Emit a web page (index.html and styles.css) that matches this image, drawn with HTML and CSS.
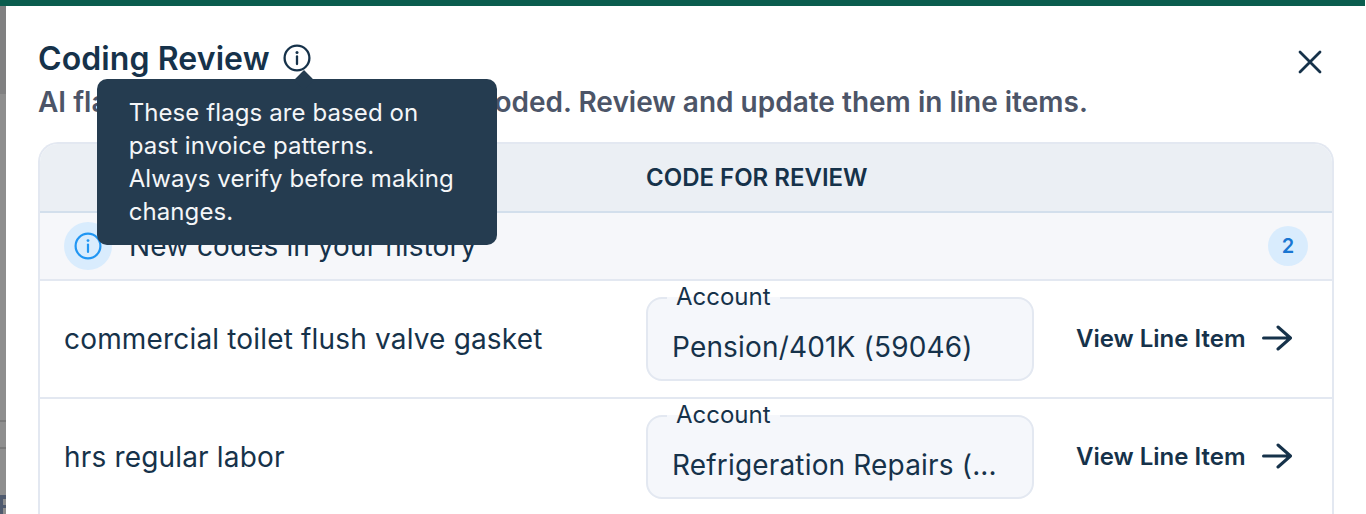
FILE: index.html
```html
<!DOCTYPE html>
<html lang="en">
<head>
<meta charset="utf-8">
<title>Coding Review</title>
<link rel="stylesheet" href="styles.css">
</head>
<body>
<div class="topbar"></div>
<div class="stage">
  <div class="backdrop"></div>
  <main class="modal">
    <header class="head">
      <div class="head-text">
        <div class="title-row">
          <h1 class="title">Coding Review</h1>
          <span class="info-wrap">
            <svg class="info-icon" viewBox="0 0 28 28" aria-hidden="true"><circle cx="14" cy="14" r="12.4" fill="none" stroke="currentColor" stroke-width="2.3"/><path d="M14 12.5v7.5" stroke="currentColor" stroke-width="2.3" stroke-linecap="round"/><circle cx="14" cy="8.6" r="1.5" fill="currentColor"/></svg>
            <span class="tooltip">These flags are based on<br>past invoice patterns.<br>Always verify before making<br>changes.</span>
          </span>
        </div>
        <p class="subtitle">AI flagged items that may be miscoded. Review and update them in line items.</p>
      </div>
      <svg class="close" viewBox="0 0 24 24" aria-hidden="true"><path d="M2 2l20 20M22 2L2 22" stroke="currentColor" stroke-width="2.8" stroke-linecap="round"/></svg>
    </header>
    <section class="table">
      <div class="thead"><span>CODE FOR REVIEW</span></div>
      <div class="group">
        <span class="group-icon"><svg viewBox="0 0 28 28" aria-hidden="true"><circle cx="14" cy="14" r="12.4" fill="none" stroke="currentColor" stroke-width="2.2"/><path d="M14 12.5v7.5" stroke="currentColor" stroke-width="2.2" stroke-linecap="round"/><circle cx="14" cy="8.6" r="1.4" fill="currentColor"/></svg></span>
        <span class="group-label">New codes in your history</span>
        <span class="badge">2</span>
      </div>
      <div class="row">
        <span class="desc">commercial toilet flush valve gasket</span>
        <div class="field"><span class="field-label">Account</span><span class="field-value">Pension/401K (59046)</span></div>
        <a class="link">View Line Item<svg viewBox="0 0 30 26" aria-hidden="true"><path d="M1.5 13h26.5M16 2l12.5 11L16 24" fill="none" stroke="currentColor" stroke-width="3" stroke-linecap="round" stroke-linejoin="round"/></svg></a>
      </div>
      <div class="row">
        <span class="desc">hrs regular labor</span>
        <div class="field"><span class="field-label">Account</span><span class="field-value">Refrigeration Repairs (...</span></div>
        <a class="link">View Line Item<svg viewBox="0 0 30 26" aria-hidden="true"><path d="M1.5 13h26.5M16 2l12.5 11L16 24" fill="none" stroke="currentColor" stroke-width="3" stroke-linecap="round" stroke-linejoin="round"/></svg></a>
      </div>
    </section>
  </main>
</div>
</body>
</html>
```
FILE: styles.css
```css
* { box-sizing: border-box; }
html, body { margin: 0; height: 514px; overflow: hidden; }
body { font-family: Inter, "Liberation Sans", sans-serif; color: #16324a; background: #fff; display: flex; flex-direction: column; }
.topbar { height: 6px; flex: none; background: #0b5d4e; margin-right: 1px; }
.stage { flex: 1; display: flex; min-height: 0; }
.backdrop { width: 6px; flex: none; background:
  linear-gradient(#4f5a6e 0 0) 0 489px / 6px 4px no-repeat,
  linear-gradient(#4f5a6e 0 0) 0 489px / 3px 19px no-repeat,
  linear-gradient(#4f5a6e 0 0) 0 499px / 6px 3px no-repeat,
  linear-gradient(#7a7a7a 0 0) 0 414px / 6px 2px no-repeat,
  linear-gradient(#7a7a7a 0 0) 0 441px / 6px 2px no-repeat,
  linear-gradient(#808081 0 0) 0 0 / 6px 88px no-repeat,
  #8e8e8e; }
.modal { flex: 1; min-width: 0; padding: 30px 32px 0 32px; }
.head { display: flex; justify-content: space-between; align-items: flex-start; }
.title-row { display: flex; align-items: center; gap: 13px; height: 44px; }
.title { margin: 0; padding-top: 1px; font-size: 32px; font-weight: 600; letter-spacing: .1px; line-height: 44px; color: #16324a; }
.info-wrap { position: relative; display: flex; color: #16324a; }
.info-icon { width: 28px; height: 28px; display: block; }
.tooltip { position: absolute; left: -186px; top: 35px; width: 400px; height: 166px; padding: 17px 32px; background: #253c50; color: #f4f6f8; border-radius: 10px; font-size: 24px; letter-spacing: .1px; line-height: 33px; z-index: 2; white-space: nowrap; }
.tooltip::before { content: ""; position: absolute; left: 200px; top: -6px; width: 14px; height: 14px; background: #253c50; transform: rotate(45deg); }
.subtitle { margin: 0; font-size: 28px; font-weight: 600; line-height: 44px; color: #4c5568; white-space: nowrap; }
.close { width: 24px; height: 24px; margin: 14px 12px 0 0; color: #16324a; flex: none; }
.table { margin-top: 18px; border: 2px solid #e3e8f1; border-bottom: 0; border-radius: 20px 20px 0 0; overflow: hidden; }
.thead { height: 69px; background: #ebeff4; border-bottom: 2px solid #d3dfec; padding-left: 606px; display: flex; align-items: center; font-size: 24px; font-weight: 600; color: #16324a; }
.group { height: 68px; background: #f6f7fa; border-bottom: 2px solid #e3e8f1; padding: 0 24px; display: flex; align-items: center; gap: 17px; }
.group-icon { width: 48px; height: 48px; border-radius: 50%; background: #d9ecfd; color: #2196f3; display: flex; align-items: center; justify-content: center; }
.group-icon svg { width: 28px; height: 28px; }
.group-label { flex: 1; font-size: 28px; letter-spacing: .08px; }
.badge { width: 40px; height: 40px; border-radius: 50%; background: #d9ecfd; color: #1976d2; font-size: 20px; font-weight: 600; display: flex; align-items: center; justify-content: center; }
.row { height: 118px; border-bottom: 2px solid #e3e8f1; padding: 0 24px; display: grid; grid-template-columns: 582px 388px 1fr; align-items: center; }
.desc { font-size: 28px; letter-spacing: .17px; }
.field { position: relative; height: 84px; background: #f5f7fb; border: 2px solid #e3e8f1; border-radius: 16px; padding: 0 24px; display: flex; align-items: center; }
.field-label { position: absolute; left: 19px; top: -16px; padding: 0 9px; background: linear-gradient(#fff 50%, #f5f7fb 50%); font-size: 24px; line-height: 28px; }
.field-value { font-size: 28px; letter-spacing: .17px; padding-top: 16px; white-space: nowrap; }
.link { margin-left: 42px; padding-bottom: 2px; display: flex; align-items: center; gap: 16px; font-size: 24px; font-weight: 600; }
.link svg { width: 30px; height: 26px; flex: none; }
```
